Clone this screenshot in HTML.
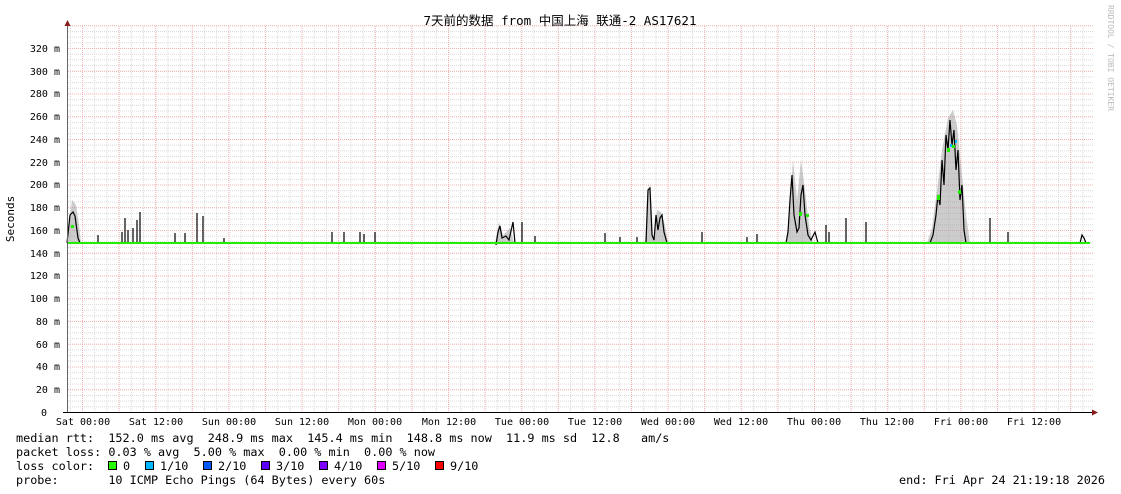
<!DOCTYPE html>
<html><head><meta charset="utf-8"><style>
html,body{margin:0;padding:0;background:#fff;width:1121px;height:494px;overflow:hidden}
svg{display:block}
text{font-family:"DejaVu Sans Mono","Liberation Mono","Noto Sans CJK SC",monospace;font-size:11.8px;fill:#000}
.s{font-size:10px}
</style></head><body>
<svg width="1121" height="494" viewBox="0 0 1121 494" xmlns="http://www.w3.org/2000/svg">
<defs>
<pattern id="hmin" x="0" y="412" width="20" height="5.6875" patternUnits="userSpaceOnUse">
<line x1="0" y1="0.5" x2="20" y2="0.5" stroke="#d8d8d8" stroke-width="1" stroke-dasharray="1,1"/></pattern>
<pattern id="hmaj" x="0" y="412" width="20" height="22.75" patternUnits="userSpaceOnUse">
<line x1="0" y1="0.5" x2="20" y2="0.5" stroke="#f4b0b0" stroke-width="1" stroke-dasharray="1,1"/></pattern>
<pattern id="vmin" x="82" y="0" width="12.2" height="20" patternUnits="userSpaceOnUse">
<line x1="0.5" y1="0" x2="0.5" y2="20" stroke="#d8d8d8" stroke-width="1" stroke-dasharray="1,1"/></pattern>
<pattern id="vmaj" x="82" y="0" width="36.6" height="20" patternUnits="userSpaceOnUse">
<line x1="0.5" y1="0" x2="0.5" y2="20" stroke="#f4b0b0" stroke-width="1" stroke-dasharray="1,1"/></pattern>
</defs>
<rect x="68" y="25" width="1025" height="387" fill="url(#hmin)"/>
<rect x="68" y="25" width="1025" height="387" fill="url(#vmin)"/>
<rect x="68" y="25" width="1025" height="387" fill="url(#hmaj)"/>
<rect x="68" y="25" width="1025" height="387" fill="url(#vmaj)"/>

<g fill="#999" opacity="0.5">
<polygon points="67,243 69,225 72,200 76,205 79,225 81,243"/>
<polygon points="927,243 932,228 937,190 942,150 948,118 953,110 957,125 962,175 966,215 970,243"/>
<polygon points="786,243 789,215 793,160 797,200 801,160 805,190 809,225 813,243"/>
<polygon points="645,243 647,200 649,183 651,200 653,235 655,243"/>
<polygon points="654,243 657,210 661,212 665,225 668,243"/>
<polygon points="495,243 499,222 503,235 510,228 514,243"/>
</g>
<g stroke="#000" stroke-width="1.2" fill="none">
<polyline points="67,243 70,215 73,212 75,216 78,238 80,243"/>
<line x1="98" y1="243" x2="98" y2="235"/>
<line x1="122" y1="243" x2="122" y2="232"/><line x1="125" y1="243" x2="125" y2="218"/><line x1="128" y1="243" x2="128" y2="230"/>
<line x1="133" y1="243" x2="133" y2="228"/><line x1="137" y1="243" x2="137" y2="220"/><line x1="140" y1="243" x2="140" y2="212"/>
<line x1="175" y1="243" x2="175" y2="233"/><line x1="185" y1="243" x2="185" y2="233"/>
<line x1="197" y1="243" x2="197" y2="213"/><line x1="203" y1="243" x2="203" y2="216"/><line x1="224" y1="243" x2="224" y2="238"/>
<line x1="332" y1="243" x2="332" y2="232"/><line x1="344" y1="243" x2="344" y2="232"/>
<line x1="360" y1="243" x2="360" y2="232"/><line x1="364" y1="243" x2="364" y2="234"/><line x1="375" y1="243" x2="375" y2="232"/>
<polyline points="496,245 498,232 500,226 502,238 506,236 509,240 513,222 515,243"/>
<line x1="522" y1="243" x2="522" y2="222"/><line x1="535" y1="243" x2="535" y2="236"/>
<line x1="605" y1="243" x2="605" y2="233"/><line x1="620" y1="243" x2="620" y2="237"/><line x1="637" y1="243" x2="637" y2="237"/>
<polyline points="646,243 648,190 650,188 652,235 654,240 656,215 658,230 660,218 662,215 664,232 667,243"/>
<line x1="702" y1="243" x2="702" y2="232"/><line x1="747" y1="243" x2="747" y2="237"/><line x1="757" y1="243" x2="757" y2="234"/>
<polyline points="786,243 788,232 790,200 792,175 794,215 797,232 799,228 801,195 803,185 805,215 808,235 811,240 815,232 818,243"/>
<line x1="826" y1="243" x2="826" y2="225"/><line x1="829" y1="243" x2="829" y2="232"/><line x1="846" y1="243" x2="846" y2="218"/><line x1="866" y1="243" x2="866" y2="222"/>
<polyline points="930,243 933,235 936,215 938,195 940,205 942,160 944,185 946,135 948,150 950,120 952,145 954,130 956,170 958,150 960,200 962,185 964,230 966,243"/>
<line x1="990" y1="243" x2="990" y2="218"/><line x1="1008" y1="243" x2="1008" y2="232"/>
<polyline points="1080,243 1082,235 1084,238 1086,243"/>
</g>
<line x1="67" y1="243" x2="1090" y2="243" stroke="#22ee00" stroke-width="2"/>
<g fill="#22ee00">
<rect x="937" y="195" width="3" height="5"/><rect x="947" y="148" width="3" height="4"/><rect x="952" y="145" width="3" height="3"/><rect x="958" y="190" width="3" height="4"/>
<rect x="799" y="212" width="3" height="4"/><rect x="806" y="214" width="3" height="3"/><rect x="71" y="225" width="3" height="3"/>
</g>
<g fill="#00b8ff"><rect x="950" y="144" width="2" height="3"/><rect x="955" y="140" width="2" height="3"/></g>

<line x1="67.5" y1="25" x2="67.5" y2="413" stroke="#666" stroke-width="1"/>
<line x1="63" y1="412.5" x2="1095" y2="412.5" stroke="#000" stroke-width="1"/>
<polygon points="67.5,20 64.5,26 70.5,26" fill="#8b1a1a"/>
<polygon points="1098,412.5 1092,409.5 1092,415.5" fill="#8b1a1a"/>

<text x="560" y="25" text-anchor="middle" style="font-size:12.5px">7天前的数据 from 中国上海 联通-2 AS17621</text>
<text transform="translate(14,219) rotate(-90)" text-anchor="middle" class="s" style="font-size:11px">Seconds</text>
<text transform="translate(1108,5) rotate(90)" style="font-size:8px;fill:#bbb">RRDTOOL / TOBI OETIKER</text>

<g text-anchor="end" class="s">
<text x="60" y="52" class="s">320 m</text><text x="60" y="75" class="s">300 m</text><text x="60" y="97" class="s">280 m</text>
<text x="60" y="120" class="s">260 m</text><text x="60" y="143" class="s">240 m</text><text x="60" y="166" class="s">220 m</text>
<text x="60" y="188" class="s">200 m</text><text x="60" y="211" class="s">180 m</text><text x="60" y="234" class="s">160 m</text>
<text x="60" y="257" class="s">140 m</text><text x="60" y="279" class="s">120 m</text><text x="60" y="302" class="s">100 m</text>
<text x="60" y="325" class="s">80 m</text><text x="60" y="348" class="s">60 m</text><text x="60" y="370" class="s">40 m</text>
<text x="60" y="393" class="s">20 m</text><text x="47" y="416" class="s">0</text>
</g>
<g text-anchor="middle">
<text x="83" y="425" class="s">Sat 00:00</text><text x="156" y="425" class="s">Sat 12:00</text><text x="229" y="425" class="s">Sun 00:00</text>
<text x="302" y="425" class="s">Sun 12:00</text><text x="375" y="425" class="s">Mon 00:00</text><text x="449" y="425" class="s">Mon 12:00</text>
<text x="522" y="425" class="s">Tue 00:00</text><text x="595" y="425" class="s">Tue 12:00</text><text x="668" y="425" class="s">Wed 00:00</text>
<text x="741" y="425" class="s">Wed 12:00</text><text x="814" y="425" class="s">Thu 00:00</text><text x="887" y="425" class="s">Thu 12:00</text>
<text x="961" y="425" class="s">Fri 00:00</text><text x="1034" y="425" class="s">Fri 12:00</text>
</g>

<text x="16" y="442" xml:space="preserve">median rtt:  152.0 ms avg  248.9 ms max  145.4 ms min  148.8 ms now  11.9 ms sd  12.8   am/s</text>
<text x="16" y="456" xml:space="preserve">packet loss: 0.03 % avg  5.00 % max  0.00 % min  0.00 % now</text>
<text x="16" y="470" xml:space="preserve">loss color:</text>
<g stroke="#000" stroke-width="1">
<rect x="108.5" y="461.5" width="8" height="8" fill="#26ff00"/>
<rect x="145.5" y="461.5" width="8" height="8" fill="#00b8ff"/>
<rect x="203.5" y="461.5" width="8" height="8" fill="#0059ff"/>
<rect x="261.5" y="461.5" width="8" height="8" fill="#5e00ff"/>
<rect x="319.5" y="461.5" width="8" height="8" fill="#7e00ff"/>
<rect x="377.5" y="461.5" width="8" height="8" fill="#dd00ff"/>
<rect x="435.5" y="461.5" width="8" height="8" fill="#ff0000"/>
</g>
<text x="123" y="470">0</text><text x="160" y="470">1/10</text><text x="218" y="470">2/10</text>
<text x="276" y="470">3/10</text><text x="334" y="470">4/10</text><text x="392" y="470">5/10</text><text x="450" y="470">9/10</text>
<text x="16" y="484" xml:space="preserve">probe:       10 ICMP Echo Pings (64 Bytes) every 60s</text>
<text x="1105" y="484" text-anchor="end">end: Fri Apr 24 21:19:18 2026</text>
</svg>
</body></html>
